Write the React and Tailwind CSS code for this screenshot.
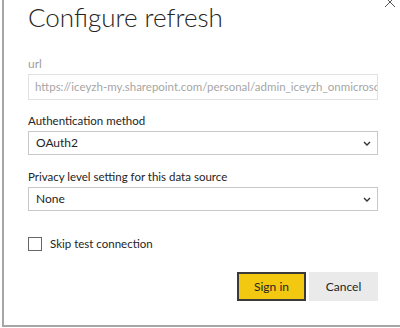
import React from 'react'

const Chevron = () => (
  <svg width="8" height="5" viewBox="0 0 8 5" className="text-[#333]">
    <path d="M1 1l3 3 3-3" fill="none" stroke="currentColor" strokeWidth="1.4" />
  </svg>
)

const Select = ({ value }) => (
  <div className="h-[24px] w-[350px] border border-[#c8c8c8] bg-white flex items-center justify-between pl-[7px] pr-[6px] text-[12px] text-[#252423]">
    <span>{value}</span>
    <Chevron />
  </div>
)

export default function App() {
  return (
    <div
      className="w-[400px] h-[328px] bg-white overflow-hidden"
      style={{ fontFamily: 'Lato, "Open Sans", sans-serif' }}
    >
      <div className="relative ml-[2px] w-[398px] h-[327px] border-l-2 border-b-2 border-[#a6a6a6] flex flex-col pl-[24px]">
        <button className="absolute right-[4px] top-[-4px] text-[#555]">
          <svg width="12" height="12" viewBox="0 0 12 12">
            <path d="M1 1l10 10M11 1L1 11" stroke="currentColor" strokeWidth="1" />
          </svg>
        </button>

        <h1 className="mt-[-1px] text-[26px] font-light leading-[36px] text-[#252423]">
          Configure refresh
        </h1>

        <label className="mt-[21px] text-[12px] leading-[16px] text-[#a0a0a0]">url</label>
        <div className="mt-[2px] h-[26px] w-[350px] border border-[#e1e1e1] flex items-center pl-[6px] overflow-hidden whitespace-nowrap text-[11.5px] text-[#a6a6a6]">
          https://iceyzh-my.sharepoint.com/personal/admin_iceyzh_onmicrosoft_com
        </div>

        <label className="mt-[12px] text-[11.5px] leading-[18px] text-[#252423]">Authentication method</label>
        <div className="mt-[1px]">
          <Select value="OAuth2" />
        </div>

        <label className="mt-[13px] text-[11.5px] leading-[18px] text-[#252423]">
          Privacy level setting for this data source
        </label>
        <div className="mt-[1px]">
          <Select value="None" />
        </div>

        <div className="mt-[24px] flex items-center gap-[8px]">
          <div className="w-[14px] h-[14px] border border-[#666] bg-white" />
          <span className="text-[11.5px] text-[#252423]">Skip test connection</span>
        </div>

        <div className="mt-[20px] w-[350px] flex justify-end gap-[3px]">
          <button className="w-[69px] h-[29px] bg-[#f2c811] border-2 border-[#3b3a39] text-[12px] text-[#252423]">
            Sign in
          </button>
          <button className="w-[69px] h-[29px] bg-[#eaeaea] text-[12px] text-[#252423]">
            Cancel
          </button>
        </div>
      </div>
    </div>
  )
}
